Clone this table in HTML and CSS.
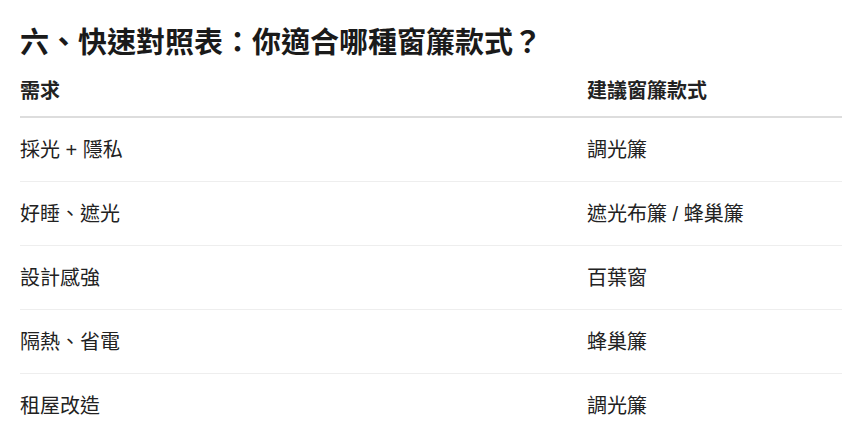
FILE: index.html
```html
<!DOCTYPE html>
<html lang="zh-Hant">
<head>
<meta charset="utf-8">
<title>快速對照表</title>
<link rel="stylesheet" href="styles.css">
</head>
<body>
<main class="page">
  <h1 class="title">六、快速對照表：你適合哪種窗簾款式？</h1>
  <table class="compare">
    <thead>
      <tr>
        <th class="col-need">需求</th>
        <th class="col-style">建議窗簾款式</th>
      </tr>
    </thead>
    <tbody>
      <tr><td>採光 + 隱私</td><td>調光簾</td></tr>
      <tr><td>好睡、遮光</td><td>遮光布簾 / 蜂巢簾</td></tr>
      <tr><td>設計感強</td><td>百葉窗</td></tr>
      <tr><td>隔熱、省電</td><td>蜂巢簾</td></tr>
      <tr><td>租屋改造</td><td>調光簾</td></tr>
    </tbody>
  </table>
</main>
</body>
</html>
```

FILE: styles.css
```css
html, body {
  margin: 0;
  padding: 0;
  background: #ffffff;
  overflow: hidden;
}
body {
  font-family: "Liberation Sans", "Noto Sans CJK TC", sans-serif;
  color: #222222;
}
.page {
  padding-left: 20px;
}
.title {
  margin: 25px 0 5px 0;
  font-size: 29px;
  line-height: 36px;
  font-weight: 700;
  color: #1a1a1a;
}
.compare {
  width: 840px;
  border-collapse: collapse;
  font-size: 20px;
  line-height: 30px;
}
.compare th {
  text-align: left;
  font-weight: 700;
  padding: 10px 0 10px 0;
  border-bottom: 2px solid #dddddd;
}
.compare td {
  padding: 17px 0 16px 0;
  border-bottom: 1px solid #eeeeee;
  font-weight: 400;
}
.col-need {
  width: 567px;
}
```
